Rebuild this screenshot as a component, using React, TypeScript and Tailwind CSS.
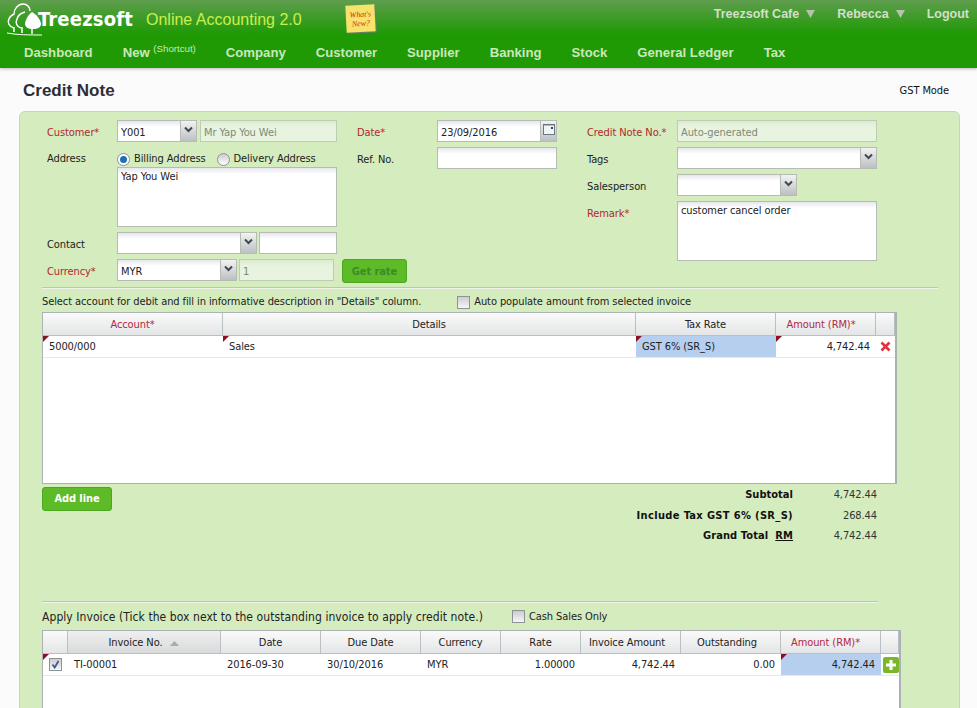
import React from 'react';

const body = '[font-family:DejaVu_Sans_Condensed,DejaVu_Sans,sans-serif]';
const arial = '[font-family:Liberation_Sans,Arial,sans-serif]';

const navItems = ['Company', 'Customer', 'Supplier', 'Banking', 'Stock', 'General Ledger', 'Tax'];

function Logo() {
  return (
    <svg width="38" height="36" viewBox="0 0 38 36" className="shrink-0" fill="none">
      <path d="M10 27C5 26 3 21 5 18C6 15 8 14 10 13C10 8 14 3 19 3C23 3 26 6 26 10" stroke="#fff" strokeWidth="1.5" />
      <path d="M17 27C13 26 11 22 13 18C14 14 17 12 21 11" stroke="#fff" strokeWidth="1.5" />
      <path d="M28 11C25 13 21 19 21 23C21 26 24 28 29 28C34 28 37 26 37 23C37 19 32 13 28 11Z" fill="#fff" />
      <path d="M28 27V33M18 26V32M10 26V31" stroke="#fff" strokeWidth="1.5" />
      <path d="M3 32C13 34 26 34 38 34" stroke="#fff" strokeWidth="1" />
    </svg>
  );
}

function Caret() {
  return (
    <svg width="9" height="8" viewBox="0 0 9 8" className="ml-[7px]">
      <path d="M0 0H9L4.5 8Z" fill="#b5c4ac" />
    </svg>
  );
}

function Header() {
  return (
    <header className="h-[68px] bg-[linear-gradient(#5f9d4e,#1f9a05_34px)] shadow-[0_1px_3px_#bbb] shrink-0">
      <div className="flex items-start h-[34px]">
        <div className="flex items-center pl-[4px] pt-[1px] w-[132px]">
          <Logo />
          <span className="text-[20px] font-bold leading-[34px] -ml-[4px] text-white tracking-[0.2px]">Treezsoft</span>
        </div>
        <span className={`${arial} ml-[14px] text-[16px] leading-[40px] tracking-normal text-[#c9f04b]`}>Online Accounting 2.0</span>
        <div className="ml-[44px] mt-[5px] w-[29px] h-[27px] bg-[#f7e36b] rotate-[-3deg] shadow-[1px_1px_1px_#777] flex items-center justify-center text-center text-[8px] leading-[9px] italic text-[#d8261c] [font-family:Liberation_Serif,serif]">What's New?</div>
        <div className={`${arial} ml-auto mr-[8px] flex gap-[22px] pt-[5px] text-[12.5px] tracking-normal font-bold text-[#d4dfcb]`}>
          <span className="flex items-center">Treezsoft Cafe <Caret /></span>
          <span className="flex items-center">Rebecca <Caret /></span>
          <span>Logout</span>
        </div>
      </div>
      <nav className={`${arial} flex gap-[30px] pl-[24px] pt-[9px] text-[13.15px] tracking-normal font-bold text-[#cbe7bd]`}>
        <span>Dashboard</span>
        <span>New <sup className="text-[9.7px] font-normal -top-[5px]">(Shortcut)</sup></span>
        {navItems.map(n => (
          <span key={n}>{n}</span>
        ))}
      </nav>
    </header>
  );
}

function Label({ children, req }: { children: React.ReactNode; req?: boolean }) {
  return <span className={req ? 'text-[#b3272d]' : 'text-[#222]'}>{children}</span>;
}

function Field({ w, text, muted, readOnly, className = '' }: { w: number; text?: string; muted?: boolean; readOnly?: boolean; className?: string }) {
  const bg = readOnly
    ? 'bg-[linear-gradient(#dcebd0,#e8f3e0_6px)] border-[#bccdb3]'
    : 'bg-[linear-gradient(#e6e6ee,#fff_6px)] border-[#b4bcb4]';
  return (
    <div
      style={{ width: w }}
      className={`h-[22px] border ${bg} px-[3px] leading-[24px] shrink-0 ${muted ? 'text-[#7d8a78]' : 'text-[#222]'} ${className}`}
    >
      {text}
    </div>
  );
}

function Chevron() {
  return (
    <svg width="9" height="7" viewBox="0 0 9 7" fill="none">
      <path d="M1 1.5L4.5 5L8 1.5" stroke="#3f4a52" strokeWidth="2" />
    </svg>
  );
}

function Select({ w, text }: { w: number; text?: string }) {
  return (
    <div style={{ width: w }} className="h-[22px] border border-[#b4bcb4] bg-[linear-gradient(#e6e6ee,#fff_6px)] flex shrink-0">
      <div className="flex-1 px-[3px] leading-[24px] text-[#222]">{text}</div>
      <div className="w-[16px] border-l border-[#b4bcb4] bg-[linear-gradient(#f2f2f2,#bcc0c2)] flex items-center justify-center pb-[3px]">
        <Chevron />
      </div>
    </div>
  );
}

function DateField() {
  return (
    <div className="w-[120px] h-[22px] border border-[#b4bcb4] bg-[linear-gradient(#e6e6ee,#fff_6px)] flex shrink-0">
      <div className="flex-1 px-[3px] leading-[24px] text-[#222]">23/09/2016</div>
      <div className="w-[16px] border-l border-[#b4bcb4] bg-[linear-gradient(#f2f2f2,#bcc0c2)] flex justify-center pt-[3px]">
        <svg width="12" height="11" viewBox="0 0 12 11">
          <rect x="0.5" y="0.5" width="11" height="10" fill="#f1f5f7" stroke="#6b7780" />
          <rect x="1" y="1" width="10" height="1" fill="#aebcc6" />
          <rect x="8" y="3" width="2" height="2" fill="#39434a" />
        </svg>
      </div>
    </div>
  );
}

function Radio({ on }: { on?: boolean }) {
  return (
    <span className={`w-[13px] h-[13px] rounded-full border border-[#8d9499] flex items-center justify-center shrink-0 ${on ? 'bg-white' : 'bg-[linear-gradient(#ccc,#fff)]'}`}>
      {on && <span className="w-[7px] h-[7px] rounded-full bg-[#1f6fb5]" />}
    </span>
  );
}

function Check({ on }: { on?: boolean }) {
  return (
    <span className="w-[13px] h-[13px] border border-[#8d9499] bg-[linear-gradient(#ccc,#f6f6f6)] flex items-center justify-center shrink-0">
      {on && (
        <svg width="9" height="9" viewBox="0 0 9 9" fill="none">
          <path d="M1.5 4.5L3.7 7.5L7.5 1" stroke="#3e5a9c" strokeWidth="1.8" />
        </svg>
      )}
    </span>
  );
}

function Row({ label, req, children, lw, className = '' }: { label?: string; req?: boolean; children: React.ReactNode; lw: number; className?: string }) {
  return (
    <div className={`flex items-center h-[22px] ${className}`}>
      <div style={{ width: lw }} className="shrink-0 pt-[4px]">
        <Label req={req}>{label}</Label>
      </div>
      {children}
    </div>
  );
}

function Corner() {
  return <span className="absolute left-0 top-0 w-0 h-0 border-t-[6px] border-r-[6px] border-t-[#8c1020] border-r-transparent" />;
}

function HeadCell({ children, red, className = '' }: { children?: React.ReactNode; red?: boolean; className?: string }) {
  return (
    <div className={`h-full flex items-center justify-center pt-[2px] border-r border-[#b9c0c4] bg-[linear-gradient(#fafafa,#e4e5e6)] ${red ? 'text-[#b3273f]' : 'text-[#222]'} ${className}`}>
      {children}
    </div>
  );
}

function Cell({ children, corner, right, blue, className = '' }: { children?: React.ReactNode; corner?: boolean; right?: boolean; blue?: boolean; className?: string }) {
  return (
    <div className={`relative h-[21px] flex items-center px-[6px] pt-[2px] ${right ? 'justify-end' : ''} ${blue ? 'bg-[#b7cfee]' : ''} ${className}`}>
      {corner && <Corner />}
      {children}
    </div>
  );
}

function CreditForm() {
  return (
    <div className="flex pl-[5px]">
      <div className="w-[290px]">
        <Row label="Customer*" req lw={70}>
          <Select w={80} text="Y001" />
          <Field w={137} text="Mr Yap You Wei" muted readOnly className="ml-[3px]" />
        </Row>
        <div className="flex items-center h-[20px] mt-[5px] pt-[4px]">
          <div className="w-[70px]"><Label>Address</Label></div>
          <Radio on />
          <span className="ml-[4px] text-[#222]">Billing Address</span>
          <span className="ml-[11px]"><Radio /></span>
          <span className="ml-[4px] text-[#222]">Delivery Address</span>
        </div>
        <div className="ml-[70px] w-[220px] h-[60px] border border-[#b4bcb4] bg-[linear-gradient(#e6e6ee,#fff_6px)] px-[3px] pt-[1px] text-[#222]">Yap You Wei</div>
        <Row label="Contact" lw={70} className="mt-[5px]">
          <Select w={140} />
          <Field w={78} className="ml-[2px]" />
        </Row>
        <Row label="Currency*" req lw={70} className="mt-[5px]">
          <Select w={120} text="MYR" />
          <Field w={95} text="1" muted readOnly className="ml-[2px]" />
          <div className="ml-[8px] w-[65px] h-[24px] self-start pt-[2px] rounded-[3px] bg-[#5cbb26] border border-[#4ca71f] flex items-center justify-center font-bold text-[#3d8a2b] shrink-0">Get rate</div>
        </Row>
      </div>
      <div className="w-[200px] ml-[20px]">
        <Row label="Date*" req lw={80}>
          <DateField />
        </Row>
        <Row label="Ref. No." lw={80} className="mt-[5px]">
          <Field w={120} />
        </Row>
      </div>
      <div className="w-[290px] ml-[30px]">
        <Row label="Credit Note No.*" req lw={90}>
          <Field w={200} text="Auto-generated" muted readOnly />
        </Row>
        <Row label="Tags" lw={90} className="mt-[5px]">
          <Select w={200} />
        </Row>
        <Row label="Salesperson" lw={90} className="mt-[5px]">
          <Select w={120} />
        </Row>
        <div className="flex mt-[5px]">
          <div className="w-[90px] pt-[5px]"><Label req>Remark*</Label></div>
          <div className="w-[200px] h-[60px] border border-[#b4bcb4] bg-[linear-gradient(#e6e6ee,#fff_6px)] px-[3px] pt-[1px] text-[#222]">customer cancel order</div>
        </div>
      </div>
    </div>
  );
}

function AccountTable() {
  return (
    <div className="w-[855px] h-[172px] border border-[#aab2b6] border-r-2 bg-white">
      <div className="h-[23px] grid grid-cols-[180px_413px_140px_100px_1fr] items-center border-b border-[#b9c0c4]">
        <HeadCell red>Account*</HeadCell>
        <HeadCell>Details</HeadCell>
        <HeadCell>Tax Rate</HeadCell>
        <HeadCell red className="pr-[9px]">Amount (RM)*</HeadCell>
        <HeadCell />
      </div>
      <div className="grid grid-cols-[180px_413px_140px_100px_1fr] border-b border-[#e8e8e8] text-[#222]">
        <Cell corner>5000/000</Cell>
        <Cell corner className="!px-[6px]">Sales</Cell>
        <Cell corner blue>GST 6% (SR_S)</Cell>
        <Cell corner right>4,742.44</Cell>
        <div className="flex items-center justify-center">
          <svg width="11" height="11" viewBox="0 0 11 11" fill="none">
            <path d="M1.5 1.5L9.5 9.5M9.5 1.5L1.5 9.5" stroke="#e0343a" strokeWidth="2.6" />
          </svg>
        </div>
      </div>
    </div>
  );
}

function Totals() {
  const rows = [
    { label: <>Subtotal</>, value: '4,742.44', cn: 'h-[21px] tracking-[0.03px]' },
    { label: <>Include Tax GST 6% (SR_S)</>, value: '268.44', cn: 'h-[21px] tracking-[0.35px]' },
    { label: <>Grand Total&nbsp; <span className="underline">RM</span></>, value: '4,742.44', cn: 'h-[19px] tracking-[0.1px]' },
  ];
  return (
    <div className="w-[400px] -mt-[3px]">
      {rows.map((r, i) => (
        <div key={i} className={`flex justify-end items-center pt-[2px] ${r.cn}`}>
          <span className="font-bold text-[#111]">{r.label}</span>
          <span className="w-[84px] text-right text-[#333] tracking-[-0.09px]">{r.value}</span>
        </div>
      ))}
    </div>
  );
}

function InvoiceTable() {
  const cols = 'grid-cols-[25px_153px_100px_100px_80px_80px_100px_100px_100px_1fr]';
  return (
    <div className="w-[859px] h-[100px] border border-[#aab2b6] border-r-2 bg-white">
      <div className={`h-[23px] grid ${cols} items-center border-b border-[#b9c0c4]`}>
        <HeadCell />
        <HeadCell className="!bg-[linear-gradient(#efefef,#d9dadb)]">
          Invoice No.
          <svg width="9" height="5" viewBox="0 0 9 5" className="ml-[8px]"><path d="M0 5L4.5 0L9 5Z" fill="#aaa" /></svg>
        </HeadCell>
        <HeadCell>Date</HeadCell>
        <HeadCell>Due Date</HeadCell>
        <HeadCell>Currency</HeadCell>
        <HeadCell>Rate</HeadCell>
        <HeadCell className="pr-[7px]">Invoice Amount</HeadCell>
        <HeadCell className="pr-[7px]">Outstanding</HeadCell>
        <HeadCell red className="pr-[10px]">Amount (RM)*</HeadCell>
        <HeadCell />
      </div>
      <div className={`grid ${cols} border-b border-[#e8e8e8] text-[#222]`}>
        <Cell corner className="justify-center !px-0 !pt-0"><Check on /></Cell>
        <Cell>TI-00001</Cell>
        <Cell>2016-09-30</Cell>
        <Cell>30/10/2016</Cell>
        <Cell>MYR</Cell>
        <Cell right>1.00000</Cell>
        <Cell right>4,742.44</Cell>
        <Cell right>0.00</Cell>
        <Cell corner right blue>4,742.44</Cell>
        <div className="flex items-center justify-center pl-[2px]">
          <span className="w-[16px] h-[16px] rounded-[2px] bg-[#7ab82a] flex items-center justify-center">
            <svg width="12" height="12" viewBox="0 0 12 12" fill="none">
              <path d="M6 1V11M1 6H11" stroke="#fff" strokeWidth="3" />
            </svg>
          </span>
        </div>
      </div>
    </div>
  );
}

export default function App() {
  return (
    <div className={`${body} h-[708px] overflow-hidden bg-[#fbfbfb] text-[11px] tracking-[-0.09px] flex flex-col`}>
      <Header />
      <div className="flex items-center justify-between h-[43px] pt-[3px] pl-[23px] pr-[28px] shrink-0">
        <h1 className={`${arial} text-[17px] tracking-normal font-bold text-[#2d2d3a]`}>Credit Note</h1>
        <span className="text-[#111]">GST Mode</span>
      </div>
      <main className="ml-[19px] w-[941px] flex-1 border border-[#c5d6ba] rounded-t-[6px] bg-[#d5ecbf] pt-[8px] pl-[22px]">
        <CreditForm />
        <div className="mt-[7px] w-[896px] border-t border-[#eef4e8] shadow-[0_-1px_0_#b9c9ae]" />
        <div className="flex items-center h-[23px] pt-[3px] text-[#222]">
          <span>Select account for debit and fill in informative description in "Details" column.</span>
          <span className="ml-[36px]"><Check /></span>
          <span className="ml-[4px]">Auto populate amount from selected invoice</span>
        </div>
        <AccountTable />
        <div className="flex justify-between w-[835px] mt-[3px]">
          <div className="w-[70px] h-[24px] rounded-[3px] bg-[#5cbb26] border border-[#4ca71f] flex items-center justify-center font-bold text-white">Add line</div>
          <Totals />
        </div>
        <div className="mt-[57px] w-[836px] border-t border-[#eef4e8] shadow-[0_-1px_0_#b9c9ae]" />
        <div className="flex items-center h-[27px] text-[#222]">
          <span className="text-[12px] tracking-[0.07px]">Apply Invoice (Tick the box next to the outstanding invoice to apply credit note.)</span>
          <span className="ml-[29px]"><Check /></span>
          <span className="ml-[4px] pt-[2px]">Cash Sales Only</span>
        </div>
        <InvoiceTable />
      </main>
    </div>
  );
}
